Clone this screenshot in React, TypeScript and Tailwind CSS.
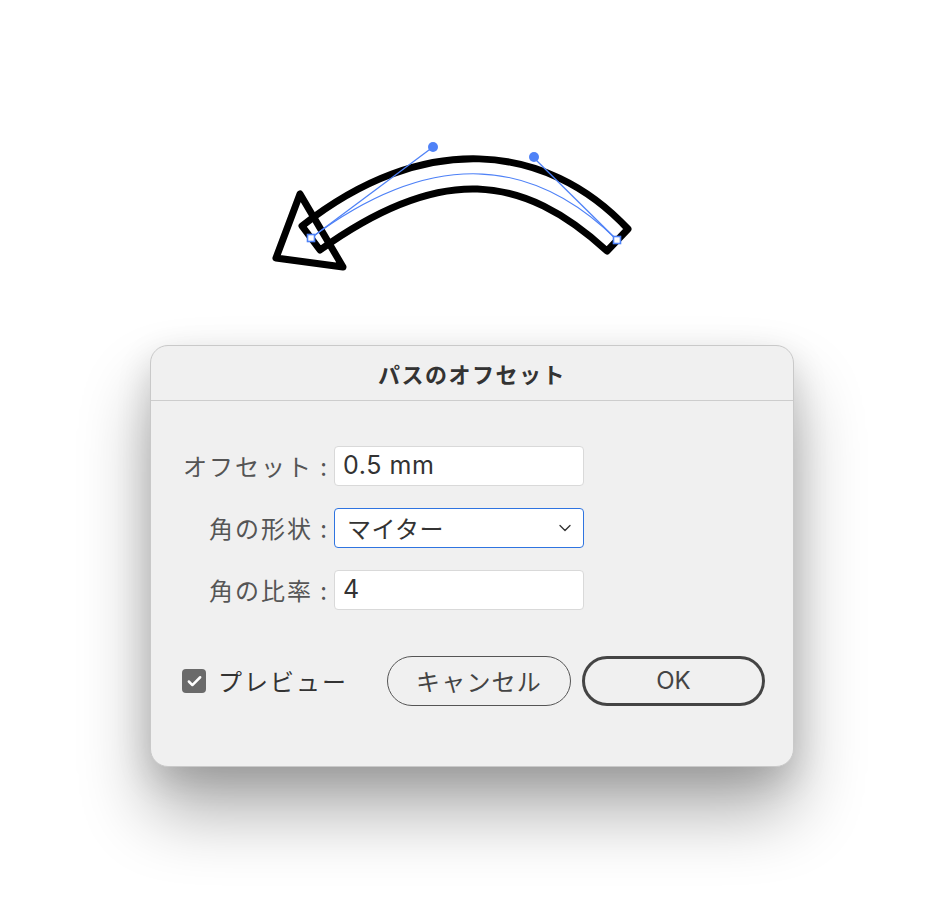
import { Check, ChevronDown } from "lucide-react";

const jp = { fontFamily: '"Noto Sans CJK JP", "Noto Sans", sans-serif' };

function ArrowArt() {
  const blue = "#4f82f7";
  return (
    <svg width="933" height="345" viewBox="0 0 933 345" className="block">
      {/* offset band */}
      <path
        d="M302 226 C 422 131, 546 141, 628 229 L 607 251 C 523 174, 441 163, 320 250 Z"
        fill="none"
        stroke="#000"
        strokeWidth="7"
        strokeLinejoin="round"
      />
      {/* arrow head */}
      <path
        d="M300 194 L 276 258 L 343 267 Z"
        fill="none"
        stroke="#000"
        strokeWidth="7"
        strokeLinejoin="round"
      />
      {/* original path + handles */}
      <path d="M311 238 C 433 147, 533 157, 617 240" fill="none" stroke={blue} strokeWidth="1.3" />
      <line x1="311" y1="238" x2="433" y2="147" stroke={blue} strokeWidth="1.3" />
      <line x1="617" y1="240" x2="533" y2="157" stroke={blue} strokeWidth="1.3" />
      <circle cx="433" cy="147" r="5" fill={blue} />
      <circle cx="534" cy="157" r="5" fill={blue} />
      <rect x="307.5" y="234.5" width="7" height="7" fill="#fff" stroke={blue} strokeWidth="1.6" />
      <rect x="613.5" y="236.5" width="7" height="7" fill="#fff" stroke={blue} strokeWidth="1.6" />
    </svg>
  );
}

function Row({ label, children }: { label: string; children: React.ReactNode }) {
  return (
    <div className="flex items-center">
      <div className="w-[178px] text-right text-[24px] text-[#555] leading-none tracking-[2px] whitespace-nowrap" style={jp}>
        {label}
      </div>
      <div className="ml-[5px]">{children}</div>
    </div>
  );
}

export default function App() {
  return (
    <div className="w-[933px] h-[907px] bg-white overflow-hidden">
      <ArrowArt />

      {/* DIALOG */}
      <div className="ml-[150px] w-[644px] h-[422px] rounded-[18px] bg-[#f0f0f0] border border-[#c9c9c9] shadow-[0_45px_70px_rgba(0,0,0,0.32),0_12px_35px_rgba(0,0,0,0.14)] flex flex-col">
        <div className="h-[55px] flex items-center justify-center border-b border-[#cdcdcd]">
          <span className="text-[22px] font-bold text-[#333] tracking-[1.5px]" style={jp}>
            パスのオフセット
          </span>
        </div>

        <div className="pt-[45px] flex flex-col gap-[22px]">
          <Row label="オフセット :">
            <div className="w-[250px] h-[40px] bg-white border border-[#d9d9d9] rounded-[4px] flex items-center pl-[8px] text-[25px] tracking-[0.6px] text-[#333]" style={{ fontFamily: "Inter, sans-serif" }}>
              0.5 mm
            </div>
          </Row>
          <Row label="角の形状 :">
            <div className="w-[250px] h-[40px] bg-white border-[1.5px] border-[#2f74e0] rounded-[4px] flex items-center justify-between pl-[12px] pr-[8px]">
              <span className="text-[24px] text-[#333] leading-none tracking-[0.5px]" style={jp}>マイター</span>
              <ChevronDown size={20} strokeWidth={1.6} className="text-[#333]" />
            </div>
          </Row>
          <Row label="角の比率 :">
            <div className="w-[250px] h-[40px] bg-white border border-[#d9d9d9] rounded-[4px] flex items-center pl-[8px] text-[25px] text-[#333]" style={{ fontFamily: "Inter, sans-serif" }}>
              4
            </div>
          </Row>
        </div>

        <div className="mt-[46px] flex items-center pl-[31px]">
          <div className="w-[24px] h-[24px] shrink-0 rounded-[4px] bg-[#6a6a6a] flex items-center justify-center">
            <Check size={17} strokeWidth={3.5} className="text-white" />
          </div>
          <span className="ml-[12px] w-[133px] shrink-0 whitespace-nowrap text-[24px] text-[#333] tracking-[2px]" style={jp}>
            プレビュー
          </span>
          <button className="ml-[36px] w-[184px] h-[50px] shrink-0 rounded-full border-[1.5px] border-[#555] text-[24px] text-[#444] tracking-[1.2px] flex items-center justify-center whitespace-nowrap" style={jp}>
            キャンセル
          </button>
          <button className="ml-[11px] w-[183px] h-[50px] shrink-0 rounded-full border-[3px] border-[#444] text-[24px] text-[#444] flex items-center justify-center" style={{ fontFamily: "Inter, sans-serif" }}>
            OK
          </button>
        </div>
      </div>
    </div>
  );
}
